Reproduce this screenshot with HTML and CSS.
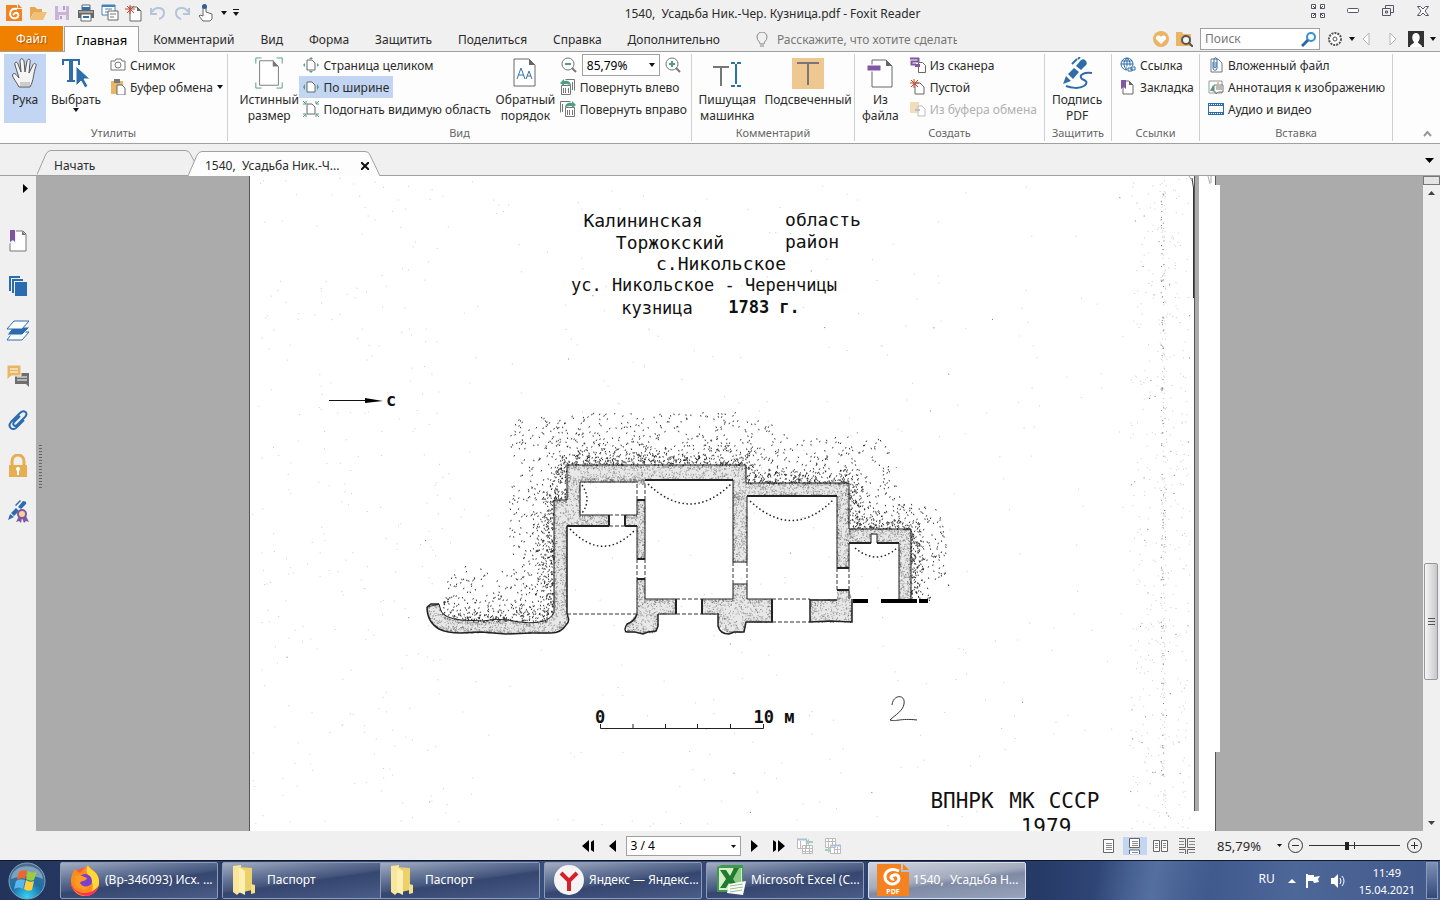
FILE: index.html
```html
<!DOCTYPE html>
<html lang="ru">
<head>
    <meta charset="UTF-8">
    <meta name="viewport" content="width=device-width, initial-scale=1.0">
    <title>1540, Усадьба Ник.-Чер. Кузница.pdf - Foxit Reader</title>
    <link rel="stylesheet" href="styles.css">
</head>
<body>
    <header class="titlebar">
        <div class="quick">
            <button aria-label="Foxit"><svg width="18" height="18" viewBox="0 0 18 18"><path d="M1 1h11v4h5v12H1z" fill="#f58220"/><path d="M13 0l4 4h-4z" fill="#f58220"/><path d="M12 5C7 4 5 7 5 10s3 5 6 4 3-4 1-5-3 1-4 2" fill="none" stroke="#fff" stroke-width="2"/></svg></button>
            <button aria-label="Открыть"><svg width="18" height="18" viewBox="0 0 18 18"><path d="M1 15V3h5l2 2h5v3H5z" fill="#e6a850"/><path d="M5 8h13l-4 8H1z" fill="#f0c078"/></svg></button>
            <button aria-label="Сохранить"><svg width="18" height="18" viewBox="0 0 18 18"><path d="M2 2h14v14H2z" fill="#c9b4d6"/><path d="M5 2h8v6H5zM6 11h7v5H6z" fill="#eee8f2"/><path d="M10 2h2v4h-2zM7 12h2v3H7z" fill="#b79cc8"/></svg></button>
            <button aria-label="Печать"><svg width="18" height="18" viewBox="0 0 18 18"><path d="M1 6h16v8H1z" fill="#666"/><path d="M5 1h8v5H5z" fill="#fff" stroke="#666"/><path d="M5 3h8v3H5z" fill="#2f6fad"/><path d="M4 10h10v7H4z" fill="#fff" stroke="#666"/><path d="M6 12h6v2H6z" fill="#2f6fad"/><path d="M2 8h14" stroke="#ddd"/></svg></button>
            <button aria-label="Отправить"><svg width="18" height="18" viewBox="0 0 18 18"><path d="M1 1h13v10H1z" fill="#fff" stroke="#4a80b5"/><path d="M1 2h13" stroke="#4a80b5" stroke-width="2"/><path d="M4 5h7M4 8h3" stroke="#4a80b5"/><path d="M7 7h10v9H7z" fill="#fff" stroke="#666"/><path d="M9 10h6M9 13h4" stroke="#777"/></svg></button>
            <button aria-label="Создать"><svg width="18" height="18" viewBox="0 0 18 18"><path d="M5 3h7l4 4v10H5z" fill="#fff" stroke="#666"/><path d="M12 3l4 4h-4z" fill="#666"/><path d="M5 1v9M0 5h10M2 2l7 7M9 2L2 9" stroke="#c8442c" stroke-width="1"/></svg></button>
            <button aria-label="Отменить"><svg width="18" height="18" viewBox="0 0 18 18"><path d="M3 8c3-6 12-5 12 1 0 3-2 5-5 6M2 4v6h6" fill="none" stroke="#b4c4da" stroke-width="2"/></svg></button>
            <button aria-label="Повторить"><svg width="18" height="18" viewBox="0 0 18 18"><path d="M15 8C12 2 3 3 3 9c0 3 2 5 5 6M16 4v6h-6" fill="none" stroke="#b4c4da" stroke-width="2"/></svg></button>
            <button aria-label="Режим касания"><svg width="18" height="18" viewBox="0 0 18 18"><path d="M6 12V3h3v5l6 2v5l-2 2H6l-4-5 1-1z" fill="#fff" stroke="#666"/><circle cx="7.500" cy="2.500" r="2.500" fill="#2f5f98"/></svg></button>
            <svg class="caret" width="6" height="4" viewBox="0 0 6 4"><path d="M0 0h6L3 4z"/></svg>
            <svg class="caret" width="6" height="8" viewBox="0 0 6 8"><path d="M0 0h6v1H0zM0 3h6L3 7z"/></svg>
        </div>
        <h1 class="window-title">1540,&nbsp; Усадьба Ник.-Чер. Кузница.pdf - Foxit Reader</h1>
        <div class="window-buttons">
            <button aria-label="Во весь экран"><svg width="14" height="14" viewBox="0 0 14 14"><path d="M.5.5h4v4h-4zM9.500.5h4v4h-4zM.5 9.500h4v4h-4zM9.500 9.500h4v4h-4z" fill="#fff" stroke="#556"/><path d="M2 2l3 3M12 2L9 5M2 12l3-3M12 12L9 9" stroke="#556"/></svg></button>
            <button aria-label="Свернуть"><svg width="12" height="6" viewBox="0 0 12 6"><rect x=".5" y=".5" width="11" height="4" rx="1" fill="#fff" stroke="#556"/></svg></button>
            <button aria-label="Восстановить"><svg width="12" height="12" viewBox="0 0 12 12"><path d="M3.500.5h8v7h-3M3.500 3V.5M.5 3.500h8v7h-8zM3.500 6h2v2h-2z" fill="none" stroke="#556"/></svg></button>
            <button aria-label="Закрыть"><svg width="12" height="10" viewBox="0 0 12 10"><path d="M.5.5h3L6 3 8.500.5h3L8 5l3.500 4.500h-3L6 7 3.500 9.500h-3L4 5z" fill="#fff" stroke="#556"/></svg></button>
        </div>
    </header>

    <nav class="tabs">
        <button class="file">Файл</button>
        <button class="tab active">Главная</button>
        <button class="tab">Комментарий</button>
        <button class="tab">Вид</button>
        <button class="tab">Форма</button>
        <button class="tab">Защитить</button>
        <button class="tab">Поделиться</button>
        <button class="tab">Справка</button>
        <button class="tab">Дополнительно</button>
        <label class="tell"><svg width="14" height="16" viewBox="0 0 14 16"><path d="M5 12c0-3-3-3-3-7a5 5 0 0 1 10 0c0 4-3 4-3 7zM5 14h4" fill="none" stroke="#888"/></svg><input type="text" placeholder="Расскажите, что хотите сделать" aria-label="Расскажите, что хотите сделать"></label>
        <div class="tools">
            <button aria-label="Избранное"><svg width="16" height="16" viewBox="0 0 16 16"><circle cx="8" cy="8" r="8" fill="#eab464"/><path d="M8 13L3 8c-1-3 3-5 5-2 2-3 6-1 5 2z" fill="#fff"/></svg></button>
            <button aria-label="Найти в папке"><svg width="17" height="16" viewBox="0 0 17 16"><path d="M0 1h6l1 2h8v12H0z" fill="#eab464"/><circle cx="10" cy="9" r="4" fill="#f4f4f4" stroke="#555" stroke-width="2"/><path d="M13 12l4 4" stroke="#555" stroke-width="2"/></svg></button>
            <label class="search"><input type="search" placeholder="Поиск" aria-label="Поиск"><svg width="16" height="16" viewBox="0 0 16 16"><circle cx="10" cy="6" r="4" fill="#f4fbff" stroke="#3d8fc9" stroke-width="2"/><path d="M7 9l-6 6" stroke="#2c66a6" stroke-width="3"/></svg></label>
            <button class="with-caret" aria-label="Параметры"><svg width="16" height="16" viewBox="0 0 16 16"><circle cx="8" cy="8" r="6" fill="#fff" stroke="#555" stroke-width="2" stroke-dasharray="2 1"/><circle cx="8" cy="8" r="2" fill="none" stroke="#555"/></svg><svg class="caret" width="6" height="4" viewBox="0 0 6 4"><path d="M0 0h6L3 4z"/></svg></button>
            <button aria-label="Назад"><svg width="8" height="14" viewBox="0 0 8 14"><path d="M7 1v12L1 7z" fill="#fff" stroke="#b5b5b5"/></svg></button>
            <button class="next" aria-label="Вперёд"><svg width="8" height="14" viewBox="0 0 8 14"><path d="M1 1v12l6-6z" fill="#fff" stroke="#b5b5b5"/></svg></button>
            <button class="with-caret" aria-label="Учётная запись"><svg width="16" height="16" viewBox="0 0 16 16"><path d="M0 0h16v16H0z" fill="#333"/><path d="M2 16c0-3 4-3 4-5C3 8 4 2 8 2s5 6 2 9c0 2 4 2 4 5z" fill="#fff"/></svg><svg class="caret" width="6" height="4" viewBox="0 0 6 4"><path d="M0 0h6L3 4z"/></svg></button>
        </div>
    </nav>

    <section class="ribbon">
        <div class="group">
            <div class="group-body">
                <button class="big on"><svg width="32" height="32" viewBox="0 0 32 32"><path d="M10 30C7 24 2 19 4 17s4 2 6 4L6 8c-1-3 2-4 3-1l3 8-1-11c0-3 3-3 4 0l1 11 2-11c1-3 4-2 3 1l-1 11 4-8c1-3 4-1 3 1-3 8-2 14-6 21z" fill="#f4f4f4" stroke="#555"/><path d="M11 27h10" stroke="#ccc" stroke-width="4"/></svg><span>Рука</span></button>
                <button class="big"><svg width="32" height="32" viewBox="0 0 32 32"><path d="M3 8V3h16v5" fill="none" stroke="#2e6da8" stroke-width="2"/><path d="M11 3v21" stroke="#2e6da8" stroke-width="4"/><path d="M7 24h8" stroke="#2e6da8" stroke-width="2"/><path d="M16 9l14 13h-6l4 7-3 2-4-7-5 5z" fill="#2e6da8" stroke="#fdfdfd"/></svg><span>Выбрать</span><svg class="caret" width="6" height="4" viewBox="0 0 6 4"><path d="M0 0h6L3 4z"/></svg></button>
                <div class="list">
                    <button class="row"><svg width="16" height="16" viewBox="0 0 16 16"><path d="M1 4h4l1-2h5l1 2h3v9H1z" fill="#fff" stroke="#777"/><circle cx="8" cy="8" r="3" fill="none" stroke="#777"/></svg>Снимок</button>
                    <button class="row"><svg width="16" height="16" viewBox="0 0 16 16"><path d="M1 2h12v13H1z" fill="#e9b668"/><path d="M4 0h6v4H4z" fill="#777"/><path d="M7 6h5l3 3v7H7z" fill="#fff" stroke="#666"/></svg>Буфер обмена<svg class="caret" width="6" height="4" viewBox="0 0 6 4"><path d="M0 0h6L3 4z"/></svg></button>
                </div>
            </div>
            <p>Утилиты</p>
        </div>
        <div class="group view">
            <div class="group-body">
                <button class="big"><svg width="32" height="32" viewBox="0 0 32 34"><path d="M6 4h14l6 6v20H6z" fill="#fff" stroke="#777"/><path d="M20 3l6 7h-6z" fill="#777"/><path d="M2 7V1h6M24 1h6v6M2 27v6h6M30 27v6h-6" fill="none" stroke="#4f9e84"/></svg><span>Истинный<br>размер</span></button>
                <div class="list">
                    <button class="row"><svg width="16" height="16" viewBox="0 0 16 16"><path d="M4 3h5l3 3v7H4z" fill="#fff" stroke="#666"/><path d="M6 2l2-2 2 2zM6 14l2 2 2-2zM2 6L0 8l2 2zM14 6l2 2-2 2z" fill="#4f9e84"/></svg>Страница целиком</button>
                    <button class="row on"><svg width="16" height="16" viewBox="0 0 16 16"><path d="M4 3h5l3 3v7H4z" fill="#fff" stroke="#666"/><path d="M2 5L0 8l2 3zM14 5l2 3-2 3z" fill="#4f9e84"/></svg>По ширине</button>
                    <button class="row"><svg width="16" height="16" viewBox="0 0 16 16"><path d="M4 3h5l3 3v7H4z" fill="#fff" stroke="#666"/><path d="M0 0l3 3M3 0v3H0M16 0l-3 3M13 0v3h3M0 16l3-3M3 16v-3H0M16 16l-3-3M13 16v-3h3" stroke="#4f9e84" fill="none"/></svg>Подогнать видимую область</button>
                </div>
                <button class="big"><svg width="32" height="32" viewBox="0 0 32 32"><path d="M5 2h15l6 6v21H5z" fill="#fff" stroke="#666"/><path d="M20 2l6 6h-6z" fill="#666"/><path d="M8 22l4-11 4 11M9 18h6M17 22l3-8 3 8M18 19h4" stroke="#3574ae" fill="none"/></svg><span>Обратный<br>порядок</span></button>
                <div class="list">
                    <div class="zoom-row">
                        <button aria-label="Уменьшить"><svg width="18" height="18" viewBox="0 0 18 18"><circle cx="8" cy="8" r="6" fill="#fff" stroke="#777"/><path d="M5 8h6" stroke="#4f9e84" stroke-width="2"/><path d="M12 12l4 4" stroke="#777" stroke-width="2"/></svg></button>
                        <span class="combo"><select aria-label="Масштаб"><option>85,79%</option></select><svg class="caret" width="6" height="4" viewBox="0 0 6 4"><path d="M0 0h6L3 4z"/></svg></span>
                        <button aria-label="Увеличить"><svg width="18" height="18" viewBox="0 0 18 18"><circle cx="8" cy="8" r="6" fill="#fff" stroke="#777"/><path d="M5 8h6M8 5v6" stroke="#4f9e84" stroke-width="2"/><path d="M12 12l4 4" stroke="#777" stroke-width="2"/></svg></button>
                    </div>
                    <button class="row"><svg width="16" height="16" viewBox="0 0 16 16"><path d="M5.500.5h9v11" fill="#fff" stroke="#777"/><path d="M1.500 6.500h9v9h-9z" fill="#fff" stroke="#777"/><path d="M3.500 9v5M5.500 9v5M8.500 9v5M12.500 3v8" stroke="#777"/><path d="M0 4l4-4v2c5-1 7 2 7 5C9 5 7 5 4 5v2z" fill="#4f9e84"/></svg>Повернуть влево</button>
                    <button class="row"><svg width="16" height="16" viewBox="0 0 16 16"><path d="M.5 11.500V.5h10" fill="#fff" stroke="#777"/><path d="M5.500 6.500h9v9h-9z" fill="#fff" stroke="#777"/><path d="M7.500 9v5M9.500 9v5M12.500 9v5M2.500 3v8" stroke="#777"/><path d="M16 4l-4-4v2C7 1 5 4 5 7c2-2 4-2 7-2v2z" fill="#4f9e84"/></svg>Повернуть вправо</button>
                </div>
            </div>
            <p>Вид</p>
        </div>
        <div class="group">
            <div class="group-body">
                <button class="big"><svg width="32" height="32" viewBox="0 0 32 32"><path d="M2 10h16M10 10v19" stroke="#777" stroke-width="2"/><path d="M20 6h4M26 6h4M25 7v20M20 29h4M26 29h4" stroke="#2e72ad" stroke-width="2"/></svg><span>Пишущая<br>машинка</span></button>
                <button class="big"><svg width="32" height="32" viewBox="0 0 32 32"><path d="M0 1h32v31H0z" fill="#eec890"/><path d="M5 6h22M16 6v22" stroke="#777" stroke-width="2"/></svg><span>Подсвеченный</span></button>
            </div>
            <p>Комментарий</p>
        </div>
        <div class="group">
            <div class="group-body">
                <button class="big"><svg width="32" height="32" viewBox="0 0 32 32"><path d="M8 3h14l6 6v21H8z" fill="#fff" stroke="#666"/><path d="M22 3l6 6h-6z" fill="#666"/><path d="M3 8h14v6H3z" fill="#8057a0" stroke="#fff"/></svg><span>Из<br>файла</span></button>
                <div class="list">
                    <button class="row"><svg width="16" height="16" viewBox="0 0 16 16"><path d="M0 1.500h9M8.500 1v3.500h-7v3H6" fill="none" stroke="#8057a0" stroke-width="2"/><path d="M8.500 5.500h4l3 3v7h-7z" fill="#fff" stroke="#666"/><path d="M5 7h5v3H5z" fill="#8057a0"/></svg>Из сканера</button>
                    <button class="row"><svg width="16" height="16" viewBox="0 0 16 16"><path d="M5 4h5l4 4v7H5z" fill="#fff" stroke="#666"/><path d="M4 0v9M0 4h9M1 1l7 7M8 1L1 8" stroke="#c8442c"/></svg>Пустой</button>
                    <button class="row" disabled><svg width="16" height="16" viewBox="0 0 16 16"><path d="M0 1h9v11H0z" fill="#f1ddb8"/><path d="M8 5h4l3 3v7H8z" fill="#fff" stroke="#bbb"/><path d="M5 8h5v2H5z" fill="#c5b6cf"/></svg>Из буфера обмена</button>
                </div>
            </div>
            <p>Создать</p>
        </div>
        <div class="group">
            <div class="group-body">
                <button class="big"><svg width="32" height="32" viewBox="0 0 32 32"><path d="M2 27l3-8 5 5zM7 17l6-6 5 4-6 7zM15 9l5-6q3-2 5 1t-1 5l-4 4z" fill="#2e6da8"/><path d="M11 7l5-5M17 2l2-2M31 16c-8-1-14 2-10 6 5 2 6 4 2 7-5 3-13 2-18 0" fill="none" stroke="#2e6da8" stroke-width="2"/></svg><span>Подпись<br>PDF</span></button>
            </div>
            <p>Защитить</p>
        </div>
        <div class="group">
            <div class="group-body">
                <div class="list">
                    <button class="row"><svg width="16" height="16" viewBox="0 0 16 16"><g fill="none" stroke="#2e6da8"><circle cx="7" cy="7" r="6"/><path d="M1 7h12M2 4h10M7 1v12M7 1c-4 3-4 9 0 12M7 1c4 3 4 9 0 12"/></g><path d="M7 9h9v6H7z" fill="#fff"/><path d="M8 11h4v3H8zM11 10h4v3h-4z" fill="none" stroke="#2e6da8"/></svg>Ссылка</button>
                    <button class="row"><svg width="16" height="16" viewBox="0 0 16 16"><path d="M3 2h6l4 4v9H3z" fill="#fff" stroke="#666"/><path d="M9 2l4 4H9z" fill="#666"/><path d="M1 1h5v9L3.500 8 1 10z" fill="#8057a0"/></svg>Закладка</button>
                </div>
            </div>
            <p>Ссылки</p>
        </div>
        <div class="group">
            <div class="group-body">
                <div class="list">
                    <button class="row"><svg width="16" height="16" viewBox="0 0 16 16"><path d="M3 2h7l4 4v9H3z" fill="#fff" stroke="#777"/><path d="M5 5v6c0 3 4 3 4 0V3c0-3-3-3-3 0v7c0 1 2 1 2 0V5" fill="none" stroke="#2e6da8"/></svg>Вложенный файл</button>
                    <button class="row"><svg width="16" height="16" viewBox="0 0 16 16"><path d="M1 2h13v12H1z" fill="#fff" stroke="#999"/><path d="M2 12l3-6 3 6z" fill="#4f9e84"/><circle cx="10" cy="4" r="1" fill="#e9a850"/><path d="M6 6h9v7h-5l-2 2v-2H6z" fill="#fff" stroke="#777"/><path d="M8 8h6M8 10h6" stroke="#777"/></svg>Аннотация к изображению</button>
                    <button class="row"><svg width="16" height="16" viewBox="0 0 16 16"><path d="M0 2h16v12H0z" fill="#2e6da8"/><path d="M1 5h14v6H1z" fill="#fff"/><path d="M1 3.500h14M1 12.500h14" stroke="#fff" stroke-dasharray="1 1"/></svg>Аудио и видео</button>
                </div>
            </div>
            <p>Вставка</p>
        </div>
        <button class="collapse" aria-label="Свернуть ленту"><svg width="9" height="6" viewBox="0 0 9 6"><path d="M1 5l3.500-4L8 5" fill="none" stroke="#999" stroke-width="2"/></svg></button>
    </section>

    <div class="doc-tabs">
        <button class="doc-tab">
            <svg width="158" height="25" viewBox="0 0 158 25"><path d="M0 24.500L9 4q2-3.500 5-3.500h134q4 0 5 3l5 9" fill="#f0f0f0" stroke="#a0a0a0"/></svg>
            <span>Начать</span>
        </button>
        <div class="doc-tab active">
            <svg width="193" height="25" viewBox="0 0 193 25"><path d="M0 25L9 4q2-3.500 5-3.500h163q4 0 5 3.500l10 21" fill="#fdfdfd" stroke="#a0a0a0"/></svg>
            <span>1540,&nbsp; Усадьба Ник.-Ч...</span>
            <button aria-label="Закрыть вкладку"><svg width="8" height="8" viewBox="0 0 8 8"><path d="M0 0l8 8M8 0L0 8" stroke="#111" stroke-width="2"/></svg></button>
        </div>
        <button class="tab-list" aria-label="Список вкладок"><svg width="9" height="5" viewBox="0 0 9 5"><path d="M0 0h9L4.500 5z"/></svg></button>
    </div>

    <main class="workspace">
        <aside class="side">
            <button class="expand" aria-label="Развернуть"><svg width="5" height="9" viewBox="0 0 5 9"><path d="M0 0l5 4.500L0 9z"/></svg></button>
            <button aria-label="Закладки"><svg width="22" height="22" viewBox="0 0 22 22"><path d="M3 1h13l3 3v17H3z" fill="#fff" stroke="#777"/><path d="M15 1l4 4h-4z" fill="#777"/><path d="M2 0h7v14l-3-3-4 3z" fill="#f0f0f0"/><path d="M3 0h5v12l-2-2-3 2z" fill="#7d559c"/></svg></button>
            <button aria-label="Страницы"><svg width="22" height="22" viewBox="0 0 22 22"><path d="M2 16V1h11v2H4v13zM5 18V4h11v2H7v12zM8 7h12v14H8z" fill="#2b6cb0"/></svg></button>
            <button aria-label="Слои"><svg width="24" height="22" viewBox="0 0 24 22"><path d="M1 20l6-8h16l-7 8z" fill="#fff" stroke="#2b6cb0"/><path d="M1 15l6-8h17l-8 8z" fill="#2b6cb0" stroke="#f0f0f0"/><path d="M1 9l7-8h15l-7 8z" fill="#fff" stroke="#2b6cb0"/></svg></button>
            <button aria-label="Комментарии"><svg width="24" height="24" viewBox="0 0 24 24"><path d="M9 9h14v14l-3-3H9z" fill="#6f6f6f"/><path d="M11 13h10M11 16h10" stroke="#fff"/><path d="M1 1h14v11H5l-4 4z" fill="#e8b766" stroke="#f0f0f0"/><path d="M4 5h8M4 8h8" stroke="#fff"/></svg></button>
            <button aria-label="Вложения"><svg width="22" height="22" viewBox="0 0 22 22"><path d="M13 6l-6 6c-2 3 1 5 3 3l8-8c4-4-1-8-5-4l-9 9c-4 5 2 10 6 5l7-7" fill="none" stroke="#2b6cb0" stroke-width="2"/></svg></button>
            <button aria-label="Безопасность"><svg width="20" height="24" viewBox="0 0 20 24"><path d="M4 11V7a6 6 0 0 1 12 0v4" fill="none" stroke="#e6ae50" stroke-width="3"/><path d="M1 11h18v12H1z" fill="#e6ae50"/><circle cx="10" cy="15" r="2" fill="#fff"/><path d="M9 15h2v6H9z" fill="#fff"/></svg></button>
            <button aria-label="Подписи"><svg width="22" height="24" viewBox="0 0 22 24"><path d="M1 21l2-6 4 3zM4 14l5-5 3 3-5 5zM11 8l5-6q4 0 3 3l-5 5zM8 6l5-5 1 1-5 5z" fill="#2b6cb0"/><path d="M12 17l-3 6 3-1 2 2 1-5 2 5 2-2 3 1-3-6z" fill="#8057a0"/><circle cx="15" cy="15" r="4" fill="#f5d59a" stroke="#8057a0" stroke-width="2"/></svg></button>
        </aside>
        <div class="viewer">
            <span class="grip"></span>
            <svg class="sheet" viewBox="239 176 981 655" role="img" aria-label="План кузницы">
                <path class="paper" d="M249 176h967v9h4v567h-4v79H249z"/>
                <path class="paper-gap" d="M1195 176h4v635h-4z"/>
                <path class="paper-edge" d="M249.500 176v655M1194.500 176v635M1215.500 176v9M1215.500 752v79"/>
                <path d="M1192 178l1.500 10v110" fill="none" stroke="#333"/>
                <path d="M1189 176l3 5M1208 176l2 8M1211 176v7" fill="none" stroke="#aaa"/>
                <path id="dust" class="dust"/>
                <path id="dustDark" class="dust-dark"/>

                <g class="lettering">
                    <text x="643" y="227">Калининская</text><text x="823" y="226">область</text>
                    <text x="670" y="249">Торжокский</text><text x="812" y="248">район</text>
                    <text x="721" y="270">с.Никольское</text>
                </g>
                <g class="lettering small">
                    <text x="704" y="291">ус. Никольское - Черенчицы</text>
                    <text x="657" y="314">кузница</text>
                </g>
                <g class="lettering figures">
                    <text x="764" y="313">1783 г.</text>
                    <text x="391" y="406">с</text>
                    <text x="600" y="723">0</text><text x="774" y="723">10 м</text>
                </g>
                <g class="lettering stamp">
                    <text x="962" y="808">ВПНРК</text><text x="1022" y="808">МК</text><text x="1074" y="808">СССР</text>
                    <text x="1046" y="834">1979</text>
                </g>

                <path d="M329 400.500h42" stroke="#111"/><path d="M365 398l18 3-18 2z"/>
                <path class="ink" d="M600.500 724v4.500h163V724M633 728v-4M665.500 728v-4M697.500 728v-4M730.500 728v-4"/>
                <path d="M892 705c1-11 14-11 12-1-1 7-9 11-14 16 6 2 10-2 27 0" fill="none" stroke="#333"/>

                <path id="walls" class="walls"/>
                <path id="stipple" class="stipple"/>
                <path id="soil" class="soil"/>
                <path class="ink" d="M427 607l12-3 2 7q3 7 20 9l22 1q12-3 25-1 23 5 36 1 8-3 10-9V500h13v-35h179v18h103v46h62v71"/>
                <path class="ink blob" d="M427 607l4-3 8 0M427 607q0 15 12 22 8 4 22 4l20-1 25 2 25-1h20q10 0 15-8 4-4 2-8l-1-4V526M637 614q-2 7-10 10-4 7 0 8l8 0 8 2 5-2 8-1 2-5v-12M718 613v13q2 8 11 8l5-2 10 0 2-10h26v-23M810 599v23l20-1 22 1v-23M810 600h27"/>
                <path class="ink" d="M580 515v-33h57M580 515h29M625 515h12v-15h8v59h-8v-33M637 579h8v20h31v15h-18M702 599h31v-15h14v15h25M702 599v15h15M733 562v-82M747 562v-66M733 562h14M837 496v72h12v-25M837 590h12v9M899 543v57M637 614v-35M871 543v-9h6v9"/>
                <path class="ink heavy" d="M567 526h42M625 526h12M645 480h88M747 496h90M849 543h22M877 543h22M609 515v11M625 515v11M637 500h8M637 559h8M637 579h8M837 568h12M837 590h12M676 599v15M702 599v15M772 599v23"/>
                <path class="bar" d="M853 601h15M881 601h36M919 601h9"/>
                <path class="dashes" d="M609 515h16M609 526h16M567 614h70M676 599h26M676 614h26M772 599h38M772 622h38M637 484v16M645 484v16M637 559v20M645 559v20M733 562v22M747 562v22M837 568v22M849 568v22"/>
                <path class="dots" d="M582 485q10 15 0 28M570 529q33 34 65 1M648 484q42 40 83 0M750 501q43 40 84-2M855 548q22 18 42 0"/>
            </svg>
        </div>
        <div class="scrollbar">
            <span class="split"></span>
            <button aria-label="Вверх"><svg width="7" height="4" viewBox="0 0 7 4"><path d="M0 4h7L3.500 0z"/></svg></button>
            <span class="before"></span>
            <span class="thumb"></span>
            <span class="after"></span>
            <button aria-label="Вниз"><svg width="7" height="4" viewBox="0 0 7 4"><path d="M0 0h7L3.500 4z"/></svg></button>
        </div>
    </main>

    <section class="status">
        <div class="pager">
            <button aria-label="Первая страница"><svg width="12" height="12" viewBox="0 0 12 12"><path d="M7 0v12L0 6zM9 2l3-2v12l-3-2z"/></svg></button>
            <button aria-label="Предыдущая страница"><svg width="12" height="12" viewBox="0 0 12 12"><path d="M10 0v12L3 6z"/></svg></button>
            <span class="combo page"><select aria-label="Страница"><option>3 / 4</option></select><svg class="caret" width="5" height="3" viewBox="0 0 5 3"><path d="M0 0h5L2.500 3z"/></svg></span>
            <button aria-label="Следующая страница"><svg width="12" height="12" viewBox="0 0 12 12"><path d="M2 0v12l7-6z"/></svg></button>
            <button aria-label="Последняя страница"><svg width="12" height="12" viewBox="0 0 12 12"><path d="M5 0v12l7-6zM0 0l3 2v8l-3 2z"/></svg></button>
            <button aria-label="Предыдущий вид"><svg width="16" height="16" viewBox="0 0 16 16"><path d="M.5 1.500h9v9h-9zM5.500 7.500h10v8h-10z" fill="#fff" stroke="#bbb"/><path d="M0 1.500h10" stroke="#a9bfdd" stroke-width="2"/><path d="M6 10.500h9M6 13.500h9M8.500 8v7M12.500 8v7M3.500 3v7" stroke="#bbb"/><path d="M8 4l4-3v2h4v2h-4v2z" fill="#a5cdbb"/></svg></button>
            <button aria-label="Следующий вид"><svg width="16" height="16" viewBox="0 0 16 16"><path d="M.5.5h10v9H.5zM5.500 7.500h10v8h-10z" fill="#fff" stroke="#bbb"/><path d="M5 7.500h11" stroke="#a9bfdd" stroke-width="2"/><path d="M1 3.500h9M3.500 1v8M7.500 1v6M9 11.500h6M9.500 9v6M12.500 9v6" stroke="#bbb"/><path d="M6 12l-3-3v2H0v2h3v2z" fill="#a5cdbb"/></svg></button>
        </div>
        <div class="view-modes">
            <button aria-label="Одна страница"><svg width="12" height="14" viewBox="0 0 12 14"><path d="M.5.5h10v13H.5z" fill="#fff" stroke="#666"/><path d="M3 4.500h6M3 6.500h6M3 8.500h6M3 10.500h6" stroke="#888"/></svg></button>
            <button class="on" aria-label="Непрерывно"><svg width="12" height="16" viewBox="0 0 12 16"><path d="M.5.5h10v9H.5zM.5 16v-4h10v4" fill="#fff" stroke="#666"/><path d="M3 3.500h6M3 5.500h6M3 7.500h6M3 14.500h6" stroke="#888"/></svg></button>
            <button aria-label="Разворот"><svg width="16" height="14" viewBox="0 0 16 14"><path d="M.5 1.500h6v11h-6zM8.500 1.500h6v11h-6z" fill="#fff" stroke="#666"/><path d="M2 4.500h3M2 6.500h3M2 8.500h3M10 4.500h3M10 6.500h3M10 8.500h3" stroke="#888"/></svg></button>
            <button aria-label="Разворот непрерывно"><svg width="16" height="16" viewBox="0 0 16 16"><path d="M0 .5h6.500v9H0M16 .5H8.500v9H16M0 11.500h6.500V16M16 11.500H8.500V16" fill="none" stroke="#666"/><path d="M0 3.500h5M0 6.500h5M10 3.500h6M10 6.500h6M0 14.500h5M10 14.500h6" stroke="#888"/></svg></button>
            <button class="percent">85,79%<svg class="caret" width="5" height="3" viewBox="0 0 5 3"><path d="M0 0h5L2.500 3z"/></svg></button>
            <button aria-label="Уменьшить"><svg width="15" height="15" viewBox="0 0 15 15"><circle cx="7.500" cy="7.500" r="7" fill="none" stroke="#333"/><path d="M4 7.500h7" stroke="#333"/></svg></button>
            <input class="slider" type="range" min="0" max="100" value="41" aria-label="Масштаб">
            <button aria-label="Увеличить"><svg width="15" height="15" viewBox="0 0 15 15"><circle cx="7.500" cy="7.500" r="7" fill="none" stroke="#333"/><path d="M4 7.500h7M7.500 4v7" stroke="#333"/></svg></button>
        </div>
    </section>

    <footer class="taskbar">
        <button class="start" aria-label="Пуск"><svg width="38" height="38" viewBox="0 0 38 38"><defs><radialGradient id="orb" cx=".5" cy=".95" r=".9"><stop offset="0" stop-color="#38d3f5"/><stop offset=".5" stop-color="#1d6fa8"/><stop offset="1" stop-color="#4b6e8e"/></radialGradient></defs><circle cx="19" cy="19" r="18" fill="url(#orb)" stroke="#7fa3bd"/><path d="M3 17C4 0 34 0 35 17c-9-4-22-3-32 0z" fill="#fff" opacity=".35"/><path d="M11 10q4-3 8-1l-2 8q-4-2-8 1z" fill="#f0642b"/><path d="M20 9q5 3 9 0l-3 9q-4 2-8-1z" fill="#9ccb3c"/><path d="M8 19q4-3 9-1l-2 9q-4-3-9 0z" fill="#5ab7ee"/><path d="M18 18q4 3 8 1l-2 9q-5 2-8-1z" fill="#fdce3c"/></svg></button>
        <button class="task"><svg width="32" height="32" viewBox="0 0 32 32"><circle cx="16" cy="18" r="14" fill="#ff5a36"/><path d="M2 18C2 10 5 8 5 5l6 4c2-3 6-5 8-8 1 4 11 6 11 17a14 14 0 0 1-28 0z" fill="#ff8a1e"/><path d="M19 1c1 5 11 6 11 17 0 5-3 10-8 12 3-7 2-13-3-18-2-4-2-8 0-11z" fill="#ffd83a"/><path d="M2 18c3 14 21 14 27 4-3 12-14 11-20 7-5-3-7-7-7-11z" fill="#ff2f5e"/><circle cx="16" cy="17" r="7" fill="#7a3fd0"/><path d="M6 12c6-2 8 1 12 2-1 4-6 2-7 5 4 6 9 3 12 1-4 8-16 6-17-1z" fill="#ff9a22"/></svg>(Вр-346093) Исх. ...</button>
        <div class="stack">
            <button class="task"><svg width="26" height="32" viewBox="0 0 26 32"><path d="M2 2l8-1v26l-4 4-4-3z" fill="#f8e69a"/><path d="M8 3l13 1v22l-13 3z" fill="#ecd06a"/><path d="M8 3l6 4v24l-6-3z" fill="#fbefb4"/><path d="M20 20l4 1v8l-4 1z" fill="#f4df8c"/></svg><span>Паспорт</span></button>
            <button class="task"><svg width="26" height="32" viewBox="0 0 26 32"><path d="M2 2l8-1v26l-4 4-4-3z" fill="#f8e69a"/><path d="M8 3l13 1v22l-13 3z" fill="#ecd06a"/><path d="M8 3l6 4v24l-6-3z" fill="#fbefb4"/><path d="M20 20l4 1v8l-4 1z" fill="#f4df8c"/></svg><span>Паспорт</span></button>
        </div>
        <button class="task"><svg width="32" height="32" viewBox="0 0 32 32"><circle cx="16" cy="16" r="15" fill="#f4f4f4"/><path d="M8 9l8 8 8-8M16 17v10" fill="none" stroke="#d8202a" stroke-width="4"/></svg>Яндекс — Яндекс...</button>
        <button class="task"><svg width="32" height="32" viewBox="0 0 32 32"><path d="M2 3l5-2h21v27H2z" fill="#3f9a4a"/><path d="M4 4h23v22H4z" fill="#d6edca"/><path d="M18 4h8v18h-8z" fill="#8ccc86"/><path d="M5 6h6l4 6 4-8h5l-6 11 6 9h-6l-4-5-3 5H5l6-9z" fill="#1f7b30"/><path d="M14 20l17-3-3 14-16-2z" fill="#fff"/><path d="M15 22l13-2M15 25l13-2M15 28l12-2" stroke="#8fbf8b"/></svg>Microsoft Excel (C...</button>
        <button class="task current"><svg width="32" height="32" viewBox="0 0 32 32"><path d="M0 0h24v8h8v24H0z" fill="#f58220"/><path d="M26 0l6 6h-6z" fill="#f58220"/><path d="M22 7C13 3 8 8 8 13s6 9 11 6 3-9-2-8-3 5 0 4" fill="none" stroke="#fff" stroke-width="3"/><text x="16" y="30" class="pdf">PDF</text></svg>1540,&nbsp; Усадьба Н...</button>
        <div class="tray">
            <span class="lang">RU</span>
            <button aria-label="Скрытые значки"><svg width="8" height="4" viewBox="0 0 8 4"><path d="M0 4h8L4 0z" fill="#fff"/></svg></button>
            <button aria-label="Центр поддержки"><svg width="16" height="16" viewBox="0 0 16 16"><path d="M2 1v14" stroke="#fff" stroke-width="2"/><path d="M3 2h6v2l6-1-2 3 1 3-5 1-1-2H3z" fill="#fff"/></svg></button>
            <button aria-label="Громкость"><svg width="16" height="16" viewBox="0 0 16 16"><path d="M1 5h3l4-4v14l-4-4H1z" fill="#fff"/><path d="M10 5q2 3 0 6M12 3q4 5 0 10" fill="none" stroke="#fff"/></svg></button>
            <time class="clock">11:49<br>15.04.2021</time>
            <button class="desktop" aria-label="Показать рабочий стол"></button>
        </div>
    </footer>
    <script src="plan.js"></script>
</body>
</html>
```
FILE: plan.js
```js
// hand-drawn texture of the plan: dots in the ground, in the walls, dust on the paper
let seed = 1783;
function rnd() {
    seed = (seed * 16807) % 2147483647;
    return seed / 2147483647;
}

const outline = [[441, 606], [443, 614], [455, 619], [480, 622], [505, 620], [530, 623], [546, 621], [554, 612], [554, 500],
    [567, 500], [567, 465], [746, 465], [746, 483], [849, 483], [849, 529], [911, 529], [911, 600]];

const ground = [[930, 600], [950, 585], [947, 550], [940, 510], [905, 498], [893, 470], [887, 436], [800, 434], [775, 430],
    [768, 412], [600, 412], [510, 419], [509, 500], [511, 572], [450, 563], [446, 590]];

// closed wall blocks
const blocks = [
    [[567, 465], [746, 465], [746, 483], [849, 483], [849, 496], [733, 496], [733, 480], [567, 480]],
    [[567, 480], [580, 480], [580, 515], [609, 515], [609, 526], [567, 526], [567, 613], [569, 619], [563, 627], [551, 633],
        [461, 633], [439, 629], [429, 619], [427, 607], [439, 604], [443, 614], [455, 619], [480, 622], [505, 620], [530, 623],
        [546, 621], [554, 612], [554, 500], [567, 500]],
    [[637, 480], [645, 480], [645, 484], [637, 484]],
    [[580, 480], [645, 480], [645, 482], [580, 482]],
    [[625, 515], [637, 515], [637, 500], [645, 500], [645, 559], [637, 559], [637, 526], [625, 526]],
    [[637, 579], [645, 579], [645, 599], [676, 599], [676, 614], [658, 614], [658, 628], [654, 633], [628, 632], [626, 625], [637, 614]],
    [[733, 496], [747, 496], [747, 562], [733, 562]],
    [[733, 584], [747, 584], [747, 599], [772, 599], [772, 622], [746, 622], [744, 632], [729, 634], [718, 626], [718, 614], [702, 614], [702, 599], [733, 599]],
    [[837, 496], [849, 496], [849, 568], [837, 568]],
    [[837, 590], [849, 590], [852, 599], [852, 622], [810, 622], [810, 599], [837, 599]],
    [[849, 529], [911, 529], [911, 600], [899, 600], [899, 543], [877, 543], [877, 534], [871, 534], [871, 543], [849, 543]]
];

function segDist(x, y, a, b) {
    const dx = b[0] - a[0], dy = b[1] - a[1];
    const len = dx * dx + dy * dy;
    let t = len ? ((x - a[0]) * dx + (y - a[1]) * dy) / len : 0;
    t = Math.max(0, Math.min(1, t));
    return Math.hypot(x - a[0] - t * dx, y - a[1] - t * dy);
}

function lineDist(x, y, pts, closed) {
    let best = 999;
    for (let i = 0; i < pts.length - (closed ? 0 : 1); i++) {
        best = Math.min(best, segDist(x, y, pts[i], pts[(i + 1) % pts.length]));
    }
    return best;
}

function inside(x, y, pts) {
    let hit = false;
    for (let i = 0, j = pts.length - 1; i < pts.length; j = i++) {
        const [xi, yi] = pts[i], [xj, yj] = pts[j];
        if ((yi > y) !== (yj > y) && x < (xj - xi) * (y - yi) / (yj - yi) + xi) hit = !hit;
    }
    return hit;
}

function dot(x, y, w) {
    return `M${x.toFixed(1)} ${y.toFixed(1)}l${w} 1`;
}

// ground, denser next to the walls
const soilArea = outline.concat(ground);
let soil = '';
for (let i = 0; i < 60000; i++) {
    const x = 440 + rnd() * 515, y = 410 + rnd() * 215;
    if (!inside(x, y, soilArea)) continue;
    const d = lineDist(x, y, outline, false);
    if (rnd() < 0.035 + 0.05 * Math.exp(-d / 30) + 0.32 * Math.exp(-d * d / 130)) {
        soil += `M${x.toFixed(1)} ${y.toFixed(1)}l${rnd() < 0.5 ? 0.4 : -0.6} 1.5`;
    }
}
document.getElementById('soil').setAttribute('d', soil);

// walls, darker towards their faces
let stipple = '';
for (const b of blocks) {
    const xs = b.map(p => p[0]), ys = b.map(p => p[1]);
    const x0 = Math.min(...xs), w = Math.max(...xs) - x0;
    const y0 = Math.min(...ys), h = Math.max(...ys) - y0;
    for (let i = 0; i < w * h; i++) {
        const x = x0 + rnd() * w, y = y0 + rnd() * h;
        if (inside(x, y, b) && rnd() < 0.15 + 0.8 * Math.exp(-lineDist(x, y, b, true) / 2)) stipple += dot(x, y, 0);
    }
}
document.getElementById('stipple').setAttribute('d', stipple);
document.getElementById('walls').setAttribute('d', blocks.map(b => 'M' + b.join('L') + 'z').join(''));

// paper dust and the fold near the right edge
let dust = '', dark = '';
for (let i = 0; i < 420; i++) dust += dot(252 + rnd() * 935, 178 + rnd() * 650, 0);
for (let i = 0; i < 200; i++) dust += dot(252 + rnd() * 200, 178 + rnd() * 650, 0);
for (let i = 0; i < 380; i++) dust += dot(1130 + rnd() * 60, 178 + rnd() * 650, 0);
for (let i = 0; i < 190; i++) dust += dot(1161 + rnd() * 5, 178 + rnd() * 630, 0);
for (let i = 0; i < 90; i++) dark += dot(1161 + rnd() * 3, 180 + rnd() * 600, 0);
for (let i = 0; i < 40; i++) dark += dot(1130 + rnd() * 60, 180 + rnd() * 640, 0);
for (let i = 0; i < 25; i++) dark += dot(260 + rnd() * 880, 180 + rnd() * 640, 0);
document.getElementById('dust').setAttribute('d', dust);
document.getElementById('dustDark').setAttribute('d', dark);
```
FILE: styles.css
```css
* {
    box-sizing: border-box;
}
body {
    margin: 0;
    height: 100vh;
    display: flex;
    flex-direction: column;
    overflow: hidden;
    background: #f0f0f0;
    color: #2b2b2b;
    font-family: "Noto Sans", "Open Sans", sans-serif;
    font-size: 12px;
}
button, input, select {
    font: inherit;
    color: inherit;
    background: none;
    border: none;
    margin: 0;
    padding: 0;
}
button {
    display: flex;
    align-items: center;
    justify-content: center;
    white-space: nowrap;
}
svg {
    flex: none;
}
.caret {
    fill: #111;
}

/* title bar */
.titlebar {
    display: flex;
    height: 26px;
}
.quick {
    display: flex;
    align-items: center;
    gap: 6px;
    padding-left: 5px;
}
.window-title {
    flex: 1;
    margin: 0;
    padding-left: 6px;
    font-size: 12px;
    font-weight: normal;
    line-height: 27px;
    text-align: center;
}
.window-buttons {
    display: flex;
    padding-bottom: 4px;
}
.window-buttons button {
    width: 35px;
}

/* ribbon tabs */
.tabs {
    display: flex;
    height: 26px;
    border-bottom: 1px solid #a0a0a0;
}
.file {
    width: 63px;
    background: #f08000;
    color: #fff;
    text-shadow: 1px 1px 1px #a05000;
}
.tab {
    padding: 2px 13px 0;
}
.tab.active {
    margin: 0 1px -1px;
    padding: 0 11px;
    font-size: 13px;
    color: #000;
    background: #fdfdfd;
    border: 1px solid #a0a0a0;
    border-bottom: none;
}
.tell {
    display: flex;
    align-items: center;
    gap: 8px;
    padding-top: 2px;
    margin-left: 22px;
}
.tell input {
    width: 180px;
}
.tell input::placeholder, .search input::placeholder {
    color: #777;
    opacity: 1;
}
.tools {
    display: flex;
    align-items: center;
    gap: 7px;
    margin-left: auto;
    padding-right: 4px;
}
.search {
    display: flex;
    align-items: center;
    width: 120px;
    height: 22px;
    padding: 0 2px 0 4px;
    background: #fff;
    border: 1px solid #a0a0a0;
}
.search input {
    flex: 1;
    min-width: 0;
}
.with-caret {
    gap: 6px;
}
.next {
    margin: 0 4px 0 12px;
}

/* ribbon */
.ribbon {
    display: grid;
    grid-template-columns: 228fr 464fr 163fr 190fr 67fr 88fr 193fr 47fr;
    height: 92px;
    padding: 2px 0;
    background: #fdfdfd;
    border-bottom: 1px solid #a0a0a0;
}
.group {
    display: flex;
    flex-direction: column;
    justify-content: space-between;
    min-width: 0;
    border-right: 1px solid #d0d0d0;
}
.group p {
    margin: 0;
    color: #666;
    font-size: 11px;
    line-height: 16px;
    text-align: center;
}
.group-body {
    display: flex;
    gap: 4px;
    padding-left: 4px;
}
.view .group-body {
    gap: 0;
    padding-left: 11px;
}
.view .big {
    padding: 3px 2px 0;
}
.big {
    flex-direction: column;
    justify-content: flex-start;
    min-width: 42px;
    height: 69px;
    padding: 3px 3px 0;
    line-height: 16px;
}
.big span {
    padding-top: 3px;
}
.on {
    background: #c2d5f2;
}
.list {
    display: flex;
    flex-direction: column;
    align-items: flex-start;
}
.row {
    height: 22px;
    padding: 0 4px;
    gap: 4px;
}
.row:disabled {
    color: #b0b0b0;
}
.zoom-row {
    display: flex;
    gap: 4px;
    padding-left: 4px;
    height: 22px;
}
.combo {
    position: relative;
    display: flex;
    width: 78px;
    background: #fff;
    border: 1px solid #a0a0a0;
    color: #000;
}
.combo select {
    appearance: none;
    width: 100%;
    padding-left: 4px;
}
.combo .caret {
    position: absolute;
    right: 4px;
    top: 8px;
    pointer-events: none;
}
.collapse {
    align-items: flex-end;
    justify-content: flex-end;
    padding: 0 8px 4px 0;
}

/* document tabs */
.doc-tabs {
    display: flex;
    align-items: flex-end;
    height: 32px;
    padding-left: 37px;
    border-bottom: 1px solid #a0a0a0;
}
.doc-tab {
    position: relative;
    display: flex;
    align-items: center;
    justify-content: flex-start;
    width: 151px;
    height: 25px;
    padding: 5px 17px 0;
}
.doc-tab > svg {
    position: absolute;
    left: 0;
    top: 0;
}
.doc-tab span {
    position: relative;
}
.doc-tab.active {
    justify-content: space-between;
    width: 193px;
    margin-bottom: -1px;
    padding: 4px 12px 0 17px;
}
.doc-tab.active button {
    position: relative;
    width: 8px;
    height: 16px;
}
.tab-list {
    margin-left: auto;
    padding: 0 6px 12px;
}

/* workspace */
.workspace {
    flex: 1;
    display: flex;
    min-height: 0;
}
.side {
    width: 36px;
    display: flex;
    flex-direction: column;
}
.side button {
    height: 45px;
}
.side .expand {
    height: 42px;
    padding: 0 0 18px 14px;
}
.viewer {
    flex: 1;
    position: relative;
    display: flex;
    justify-content: center;
    min-width: 0;
    background: #ababab;
}
.grip {
    position: absolute;
    left: 3px;
    top: 41%;
    width: 3px;
    height: 44px;
    background: repeating-linear-gradient(#666 0 1px, transparent 1px 3px);
}
.sheet {
    height: 100%;
    max-width: 100%;
}
.paper {
    fill: #fff;
}
.paper-gap {
    fill: #ababab;
}
.paper-edge {
    fill: none;
    stroke: #555;
}
.dust {
    fill: none;
    stroke: #ccc;
}
.dust-dark {
    fill: none;
    stroke: #777;
}
.walls {
    fill: #e8e8e8;
}
.stipple {
    fill: none;
    stroke: #555;
    stroke-width: .5;
}
.soil {
    fill: none;
    stroke: #222;
    stroke-width: .9;
}
.ink {
    fill: none;
    stroke: #222;
}
.blob {
    stroke-width: 1.5;
}
.heavy {
    stroke-width: 2;
}
.bar {
    stroke: #000;
    stroke-width: 4;
}
.dashes {
    fill: none;
    stroke: #333;
    stroke-dasharray: 4 2;
}
.dots {
    fill: none;
    stroke: #222;
    stroke-width: 1.5;
    stroke-dasharray: 1.5 2.5;
}
.lettering {
    fill: #111;
    font-family: "DejaVu Sans Mono", monospace;
    font-size: 18px;
    text-anchor: middle;
}
.small {
    font-size: 17px;
}
.figures {
    font-size: 17px;
    font-weight: bold;
}
.stamp {
    font-size: 21px;
}

/* scroll bar */
.scrollbar {
    width: 17px;
    display: flex;
    flex-direction: column;
}
.split {
    height: 9px;
    background: #e4e4e4;
    border: 1px solid #777;
}
.scrollbar button {
    height: 16px;
    fill: #444;
}
.before {
    flex: 363;
}
.thumb {
    flex: 116;
    margin: 0 2px 0 1px;
    border: 1px solid #979797;
    border-radius: 2px;
    background: repeating-linear-gradient(#555 0 1px, transparent 1px 3px) center / 7px 7px no-repeat, linear-gradient(90deg, #f6f6f6, #c8c8cc);
}
.after {
    flex: 135;
}

/* status bar */
.status {
    display: grid;
    grid-template-columns: 1fr auto 1fr;
    align-items: center;
    height: 29px;
    padding-right: 18px;
}
.pager {
    grid-column: 2;
    display: flex;
    align-items: center;
    gap: 12px;
}
.page {
    width: 115px;
    height: 20px;
    margin: 0 -4px;
}
.view-modes {
    display: flex;
    align-items: center;
    justify-content: flex-end;
    gap: 2px;
}
.view-modes button {
    min-width: 24px;
    height: 18px;
}
.percent {
    gap: 16px;
    padding: 0 3px 0 16px;
    font-size: 13px;
}
.view-modes button:nth-last-child(-n+3) {
    min-width: 16px;
}
.slider {
    appearance: none;
    width: 91px;
    height: 16px;
    margin: 0 4px;
    background: linear-gradient(#333, #333) 45px center / 1px 7px no-repeat, linear-gradient(#333, #333) center / 100% 1px no-repeat;
}
.slider::-webkit-slider-thumb {
    appearance: none;
    width: 4px;
    height: 8px;
    background: #222;
}

/* taskbar */
.taskbar {
    display: flex;
    gap: 4px;
    height: 40px;
    padding: 1px 2px 1px 0;
    border-top: 1px solid #10182c;
    background: linear-gradient(100deg, transparent 76%, #5470a0 80%, transparent 84%), linear-gradient(90deg, #22345c, #3a4f7f 40%, #263a66 72%, #3c558a 82%, #4d6799 90%, #42598a);
    color: #fff;
}
.start {
    width: 56px;
    padding-right: 2px;
}
.task {
    width: 158px;
    min-width: 0;
    justify-content: flex-start;
    gap: 4px;
    padding: 0 0 2px 8px;
    border: 1px solid #8e9bb5;
    border-radius: 2px;
    background: linear-gradient(172deg, #a4aec2, #6a7a9b 28%, #44557d 50%, #35466f 54%, #4a5d88);
}
.stack {
    display: flex;
    border: 1px solid #8e9bb5;
    border-radius: 2px;
}
.stack .task {
    gap: 10px;
    border-width: 0 1px 0 0;
    border-radius: 0;
}
.stack .task:last-child {
    border: none;
}
.task.current {
    border-color: #d9dee6;
    background: linear-gradient(172deg, #d0d5de, #a3acbe 45%, #7f8ba5 55%, #98a4bb);
}
.pdf {
    fill: #fff;
    font-size: 7px;
    font-weight: bold;
    text-anchor: middle;
}
.tray {
    display: flex;
    align-items: center;
    gap: 9px;
    margin-left: auto;
}
.lang {
    padding: 0 4px 4px 0;
}
.clock {
    padding: 0 2px 0 4px;
    font-size: 11px;
    line-height: 17px;
    text-align: center;
}
.desktop {
    align-self: stretch;
    width: 12px;
    border: 1px solid #8e9bb5;
    background: linear-gradient(#7c8fb5, #34497a);
}
```
